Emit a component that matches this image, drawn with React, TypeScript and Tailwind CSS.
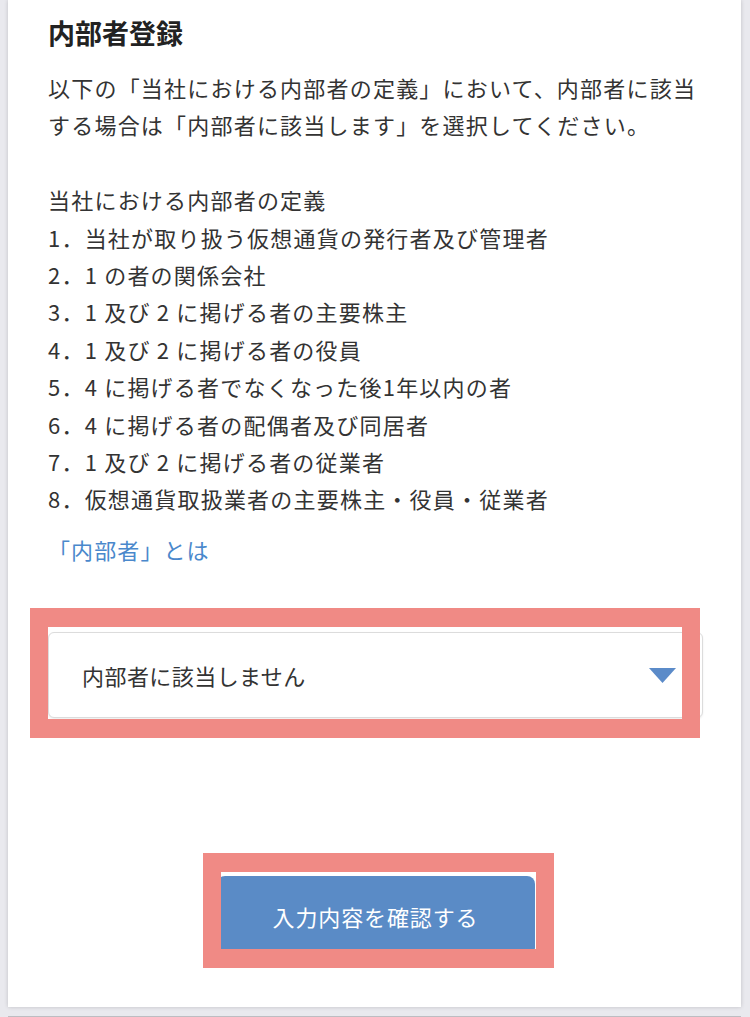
import React from "react";

const DEFINITIONS = [
  "当社が取り扱う仮想通貨の発行者及び管理者",
  "1 の者の関係会社",
  "1 及び 2 に掲げる者の主要株主",
  "1 及び 2 に掲げる者の役員",
  "4 に掲げる者でなくなった後1年以内の者",
  "4 に掲げる者の配偶者及び同居者",
  "1 及び 2 に掲げる者の従業者",
  "仮想通貨取扱業者の主要株主・役員・従業者",
];

// annotation frame drawn over a control
function Highlight({ className }: { className: string }) {
  return (
    <div
      className={`pointer-events-none absolute border-x-[18px] border-y-[19px] border-[#f08a85] ${className}`}
    />
  );
}

export default function App() {
  return (
    <div
      className="flex min-h-[1017px] w-[750px] flex-col bg-[#e9e9ee] pl-[8px] pr-[9px] text-[#333]"
      style={{ fontFamily: '"Noto Sans CJK JP", "Noto Sans", sans-serif' }}
    >
      <div className="flex flex-col bg-white pl-10 pr-[38px] pt-[15px] pb-[51px] shadow-[0_0_4px_rgba(0,0,0,0.18)]">
        <h1 className="text-[27px] font-bold leading-[36px] text-[#222]">内部者登録</h1>

        <div className="mt-[18px] text-[22px] leading-[37.4px] tracking-[0.055em]">
          <p>以下の「当社における内部者の定義」において、内部者に該当する場合は「内部者に該当します」を選択してください。</p>
          <p className="h-[37.4px]" />
          <p>当社における内部者の定義</p>
          <ol>
            {DEFINITIONS.map((d, i) => (
              <li key={i}>
                {i + 1}．{d}
              </li>
            ))}
          </ol>
        </div>

        <a className="mt-[13px] text-[22px] leading-[37.4px] tracking-[0.05em] text-[#4a88cc]">「内部者」とは</a>

        <div className="relative mt-[64px]">
          <div className="flex h-[86px] w-[655px] items-center justify-between rounded-[6px] border border-[#dcdcdc] bg-white pl-[33px] pr-[26px] shadow-[0_1px_2px_rgba(0,0,0,0.08)]">
            <span className="text-[22px] tracking-[0.02em] text-[#333]">内部者に該当しません</span>
            <svg width="27" height="15" viewBox="0 0 27 15">
              <polygon points="0,0 27,0 13.5,15" fill="#5b8bc9" />
            </svg>
          </div>
          <Highlight className="-left-[18px] -top-[24px] h-[130px] w-[670px]" />
        </div>

        <div className="relative mx-auto mt-[158px] w-[318px]">
          <button className="flex h-[80px] w-full items-center justify-center rounded-[8px] bg-[#5a8bc6] text-[22px] tracking-[0.04em] text-white">
            入力内容を確認する
          </button>
          <Highlight className="-left-[14px] -top-[23px] h-[115px] w-[351px]" />
        </div>
      </div>
      <div className="h-[9px]" />
      <div className="h-[3px] bg-[#bdbdc2]" />
    </div>
  );
}
